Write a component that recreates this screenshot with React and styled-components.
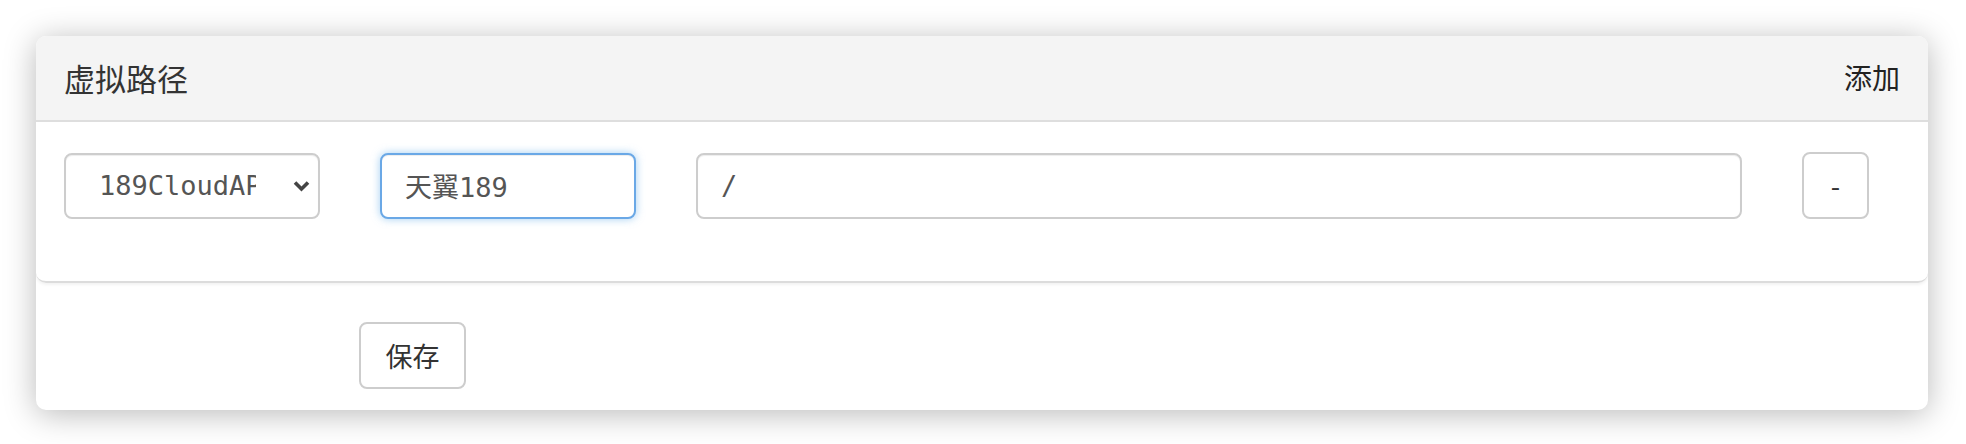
import React, { useEffect, useRef } from 'react';
import styled, { createGlobalStyle } from 'styled-components';

const GlobalStyle = createGlobalStyle`
    html, body {
        margin: 0;
        padding: 0;
        background: #ffffff;
    }
    * {
        box-sizing: border-box;
    }
`;

const Page = styled.div`
    padding: 36px 38px 36px 36px;
    font-family: "Noto Sans CJK SC", "Noto Sans", sans-serif;
`;

const Card = styled.div`
    background: #fff;
    border-radius: 10px;
    box-shadow: 0 4px 32px rgba(0, 0, 0, 0.28);
    overflow: hidden;
`;

const Header = styled.div`
    height: 86px;
    display: flex;
    align-items: center;
    justify-content: space-between;
    padding: 0 28px 2px 28px;
    background: #f4f4f4;
    border-bottom: 2px solid #dedede;
`;

const Title = styled.div`
    font-size: 31px;
    color: #333;
`;

const AddLink = styled.div`
    font-size: 28px;
    color: #222;
    cursor: pointer;
`;

const Body = styled.div`
    padding: 30px 59px 62px 28px;
    border-bottom: 2px solid #dcdcdc;
    border-radius: 0 0 10px 10px;
    box-shadow: 0 2px 3px rgba(0, 0, 0, 0.05);
`;

const Row = styled.div`
    display: flex;
    align-items: center;
    gap: 60px;
`;

const SelectWrap = styled.div`
    position: relative;
    flex: none;
`;

const controlBase = `
    height: 66px;
    border: 2px solid #cdcdcd;
    border-radius: 8px;
    background: #fff;
    color: #555;
    font-family: "DejaVu Sans Mono", "Noto Sans CJK SC", monospace;
    font-size: 27px;
    outline: none;
    box-shadow: inset 0 1px 1px rgba(0, 0, 0, 0.075);
`;

const Select = styled.select`
    ${controlBase}
    display: block;
    width: 256px;
    padding: 0 62px 0 33px;
    appearance: none;
    -webkit-appearance: none;
`;

const Chevron = styled.svg`
    position: absolute;
    left: 229px;
    top: 27px;
    width: 17px;
    height: 12px;
    pointer-events: none;
`;

const TextInput = styled.input`
    ${controlBase}
    flex: ${props => (props.$grow ? '1 1 auto' : 'none')};
    min-width: 0;
    width: ${props => props.$width || 'auto'};
    padding: 0 23px;
    border-color: ${props => (props.$focused ? '#6aa8e6' : '#cdcdcd')};
    box-shadow: ${props =>
        props.$focused
            ? 'inset 0 1px 1px rgba(0,0,0,.075), 0 0 8px rgba(102,175,233,.6)'
            : 'inset 0 1px 1px rgba(0,0,0,.075)'};
    caret-color: #333;
`;

const Button = styled.button`
    flex: none;
    height: 67px;
    width: ${props => props.$width}px;
    border: 2px solid #cdcdcd;
    border-radius: 8px;
    background: #fff;
    color: #333;
    font-family: "Noto Sans CJK SC", "DejaVu Sans Mono", sans-serif;
    font-size: 27px;
    padding: 0;
    cursor: pointer;
`;

const Footer = styled.div`
    padding: 39px 0 21px 323px;
`;

export default function App() {
    const nameRef = useRef(null);

    useEffect(() => {
        const el = nameRef.current;
        if (el) {
            el.focus();
            el.setSelectionRange(el.value.length, el.value.length);
        }
    }, []);

    return (
        <Page>
            <GlobalStyle />
            <Card>
                <Header>
                    <Title>虚拟路径</Title>
                    <AddLink>添加</AddLink>
                </Header>
                <Body>
                    <Row>
                        <SelectWrap>
                            <Select defaultValue="189CloudAPI">
                                <option value="189CloudAPI">189CloudAPI</option>
                            </Select>
                            <Chevron viewBox="0 0 17 12">
                                <path d="M2 2.5 L8.5 9 L15 2.5" fill="none" stroke="#444" strokeWidth="3.6" />
                            </Chevron>
                        </SelectWrap>
                        <TextInput ref={nameRef} $width="256px" $focused defaultValue="天翼189" />
                        <TextInput $grow defaultValue="/" />
                        <Button $width={67}>-</Button>
                    </Row>
                </Body>
                <Footer>
                    <Button $width={107}>保存</Button>
                </Footer>
            </Card>
        </Page>
    );
}
